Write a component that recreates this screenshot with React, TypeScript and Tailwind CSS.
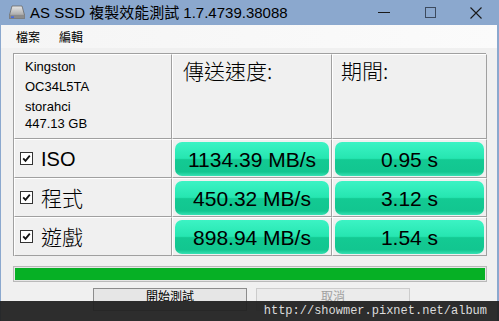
import React from 'react';

const sans = "font-['Liberation_Sans','Noto_Sans_CJK_TC',sans-serif]";
const cjk = "font-['Noto_Sans_CJK_TC','Liberation_Sans',sans-serif]";

// cell with inset style border: gray on right/bottom, white on left/top
const cell = 'border-r border-b border-r-[#a0a0a0] border-b-[#a0a0a0] border-l border-t border-l-white border-t-white';

function DriveIcon() {
  return (
    <svg width="16" height="15" viewBox="0 0 16 15">
      <defs>
        <linearGradient id="dg" x1="0" y1="0" x2="0" y2="1">
          <stop offset="0" stopColor="#e8e8e8" />
          <stop offset="0.6" stopColor="#b4b4b4" />
          <stop offset="1" stopColor="#7a7a7a" />
        </linearGradient>
      </defs>
      <path d="M3 1 H13 L15.5 10 V13.5 H0.5 V10 Z" fill="url(#dg)" stroke="#6a6a6a" strokeWidth="0.8" />
      <rect x="0.5" y="10" width="15" height="3.5" fill="#8c8c8c" />
      <rect x="2" y="11.5" width="3" height="1.2" fill="#2a5cff" />
    </svg>
  );
}

function CheckBox() {
  return (
    <div className="w-[13px] h-[13px] border border-[#333] bg-white flex items-center justify-center shrink-0">
      <svg width="9" height="9" viewBox="0 0 9 9">
        <path d="M1.2 4.3 L3.5 6.8 L7.8 1.6" fill="none" stroke="#111" strokeWidth="1.8" />
      </svg>
    </div>
  );
}

function Value({ text }: { text: string }) {
  return (
    <div className={`${cell} px-[2px] pt-[2px] pb-[1px]`}>
      <div className="h-full rounded-[7px] bg-[linear-gradient(to_bottom,#3cf3c4_0%,#26e6b1_48%,#13ca93_52%,#12c690_88%,#37e2b4_100%)] flex items-center justify-center text-[21px] leading-none text-black">
        {text}
      </div>
    </div>
  );
}

const rows = [
  { name: 'ISO', latin: true, speed: '1134.39 MB/s', time: '0.95 s' },
  { name: '程式', latin: false, speed: '450.32 MB/s', time: '3.12 s' },
  { name: '遊戲', latin: false, speed: '898.94 MB/s', time: '1.54 s' },
];

export default function App() {
  return (
    <div className={`w-[499px] h-[321px] relative overflow-hidden flex flex-col bg-[#8ba8ce] ${sans}`}>
      {/* Title bar */}
      <div className="h-[25px] flex items-center shrink-0">
        <div className="ml-[9px] w-[16px] flex items-center">
          <DriveIcon />
        </div>
        <div className={`ml-[5px] text-[15px] text-black leading-none ${sans}`}>
          AS SSD 複製效能測試 1.7.4739.38088
        </div>
        <div className="ml-auto flex h-full">
          <div className="w-[46px] flex items-center justify-center">
            <div className="w-[12px] h-[1px] bg-[#1a1a1a]" />
          </div>
          <div className="w-[46px] flex items-center justify-center">
            <div className="w-[11px] h-[11px] border border-[#3c4a5e]" />
          </div>
          <div className="w-[46px] flex items-center justify-center">
            <svg width="12" height="12" viewBox="0 0 12 12">
              <path d="M0.5 0.5 L11.5 11.5 M11.5 0.5 L0.5 11.5" stroke="#1a1a1a" strokeWidth="1.1" />
            </svg>
          </div>
        </div>
      </div>

      {/* Window body */}
      <div className="flex-1 ml-[1px] mr-[2px] bg-[#f0f0f0] flex flex-col">
        {/* Menu */}
        <div className="h-[23px] shrink-0 bg-[linear-gradient(to_right,#f5f5f5,#fbfbfb)] flex items-center text-[12px] text-black">
          <span className={`ml-[15px] ${cjk}`}>檔案</span>
          <span className={`ml-[19px] ${cjk}`}>編輯</span>
        </div>

        {/* Results grid */}
        <div className="ml-[12px] mt-[5px] w-[473px] grid grid-cols-[158px_160px_155px] grid-rows-[85px_39px_39px_39px] border-t border-l border-[#a0a0a0]">
          <div className={`${cell} pl-[10px] pt-[2px] text-[13px] text-black`}>
            <div className="h-[20px] leading-[20px]">Kingston</div>
            <div className="h-[20px] leading-[20px]">OC34L5TA</div>
            <div className="h-[17px] leading-[20px]">storahci</div>
            <div className="h-[20px] leading-[20px]">447.13 GB</div>
          </div>
          <div className={`${cell} pl-[10px] pt-[3px] text-[21px] leading-[24px] font-light text-black ${cjk}`}>傳送速度:</div>
          <div className={`${cell} pl-[8px] pt-[3px] text-[21px] leading-[24px] font-light text-black ${cjk}`}>期間:</div>

          {rows.map((r) => (
            <React.Fragment key={r.name}>
              <div className={`${cell} flex items-center pl-[5px]`}>
                <CheckBox />
                <span className={`ml-[8px] text-black leading-none ${r.latin ? 'text-[20px]' : `text-[21px] font-light ${cjk}`}`}>
                  {r.name}
                </span>
              </div>
              <Value text={r.speed} />
              <Value text={r.time} />
            </React.Fragment>
          ))}
        </div>

        {/* Progress */}
        <div className="ml-[12px] mt-[10px] w-[474px] h-[16px] border border-[#b9b9b9] bg-[#e6e6e6] p-[1px]">
          <div className="h-full w-full bg-[#06b025]" />
        </div>

        {/* Buttons */}
        <div className="flex mt-[6px] ml-[92px] gap-[9px]">
          <div className={`w-[154px] h-[23px] border border-[#8c8c8c] bg-[#e6e6e6] flex justify-center text-[12px] leading-[12px] pt-[1px] text-black ${cjk}`}>
            開始測試
          </div>
          <div className={`w-[154px] h-[23px] border border-[#cccccc] bg-[#ebebeb] flex justify-center text-[12px] leading-[12px] pt-[1px] text-[#a0a0a0] ${cjk}`}>
            取消
          </div>
        </div>
      </div>

      {/* Watermark overlay */}
      <div className="absolute left-0 right-0 bottom-0 h-[20px] bg-[#222222]/95 flex items-center justify-end pr-[12px]">
        <span className="font-['Liberation_Mono',monospace] text-[12px] text-[#dcdcdc] leading-none">
          http://showmer.pixnet.net/album
        </span>
      </div>
    </div>
  );
}
